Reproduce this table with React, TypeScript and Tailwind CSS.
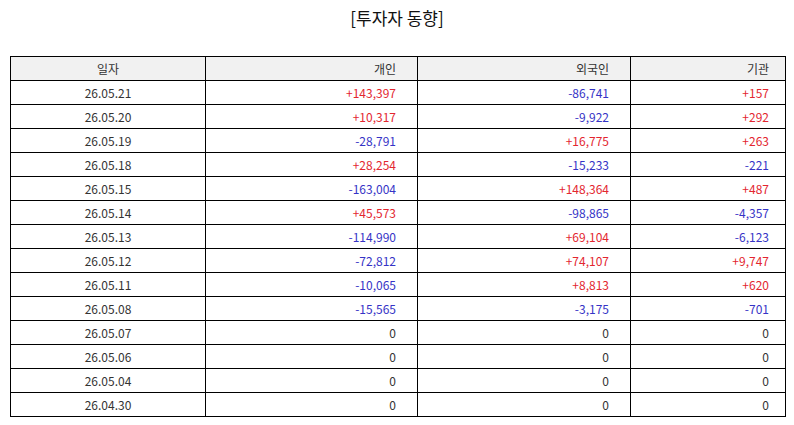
import React from 'react';

type Row = { date: string; indiv: string; foreign: string; inst: string };

const rows: Row[] = [
  { date: '26.05.21', indiv: '+143,397', foreign: '-86,741', inst: '+157' },
  { date: '26.05.20', indiv: '+10,317', foreign: '-9,922', inst: '+292' },
  { date: '26.05.19', indiv: '-28,791', foreign: '+16,775', inst: '+263' },
  { date: '26.05.18', indiv: '+28,254', foreign: '-15,233', inst: '-221' },
  { date: '26.05.15', indiv: '-163,004', foreign: '+148,364', inst: '+487' },
  { date: '26.05.14', indiv: '+45,573', foreign: '-98,865', inst: '-4,357' },
  { date: '26.05.13', indiv: '-114,990', foreign: '+69,104', inst: '-6,123' },
  { date: '26.05.12', indiv: '-72,812', foreign: '+74,107', inst: '+9,747' },
  { date: '26.05.11', indiv: '-10,065', foreign: '+8,813', inst: '+620' },
  { date: '26.05.08', indiv: '-15,565', foreign: '-3,175', inst: '-701' },
  { date: '26.05.07', indiv: '0', foreign: '0', inst: '0' },
  { date: '26.05.06', indiv: '0', foreign: '0', inst: '0' },
  { date: '26.05.04', indiv: '0', foreign: '0', inst: '0' },
  { date: '26.04.30', indiv: '0', foreign: '0', inst: '0' },
];

const tone = (v: string) =>
  v.startsWith('+') ? 'text-[#e3262f]' : v.startsWith('-') ? 'text-[#3533c6]' : 'text-[#333]';

const cell = 'border border-black h-[24px] p-0 leading-none';

export default function App() {
  return (
    <div
      className="w-[794px] h-[425px] bg-white"
      style={{ fontFamily: '"Noto Sans CJK KR", "Noto Sans", sans-serif' }}
    >
      <h1 className="h-[56px] pt-[5px] text-center text-[17px] text-[#111] leading-[26px]">
        [투자자 동향]
      </h1>
      <table className="ml-[10px] w-[775px] border-collapse table-fixed text-[12px] text-[#333]">
        <colgroup>
          <col className="w-[195px]" />
          <col className="w-[212px]" />
          <col className="w-[213px]" />
          <col className="w-[155px]" />
        </colgroup>
        <thead>
          <tr className="bg-[#f1f1f1]">
            <th className={`${cell} font-normal text-center`}>일자</th>
            <th className={`${cell} font-normal text-right pr-[21px]`}>개인</th>
            <th className={`${cell} font-normal text-right pr-[21px]`}>외국인</th>
            <th className={`${cell} font-normal text-right pr-[16px]`}>기관</th>
          </tr>
        </thead>
        <tbody>
          {rows.map((r) => (
            <tr key={r.date}>
              <td className={`${cell} text-center`}>{r.date}</td>
              <td className={`${cell} text-right pr-[21px] ${tone(r.indiv)}`}>{r.indiv}</td>
              <td className={`${cell} text-right pr-[21px] ${tone(r.foreign)}`}>{r.foreign}</td>
              <td className={`${cell} text-right pr-[16px] ${tone(r.inst)}`}>{r.inst}</td>
            </tr>
          ))}
        </tbody>
      </table>
    </div>
  );
}
